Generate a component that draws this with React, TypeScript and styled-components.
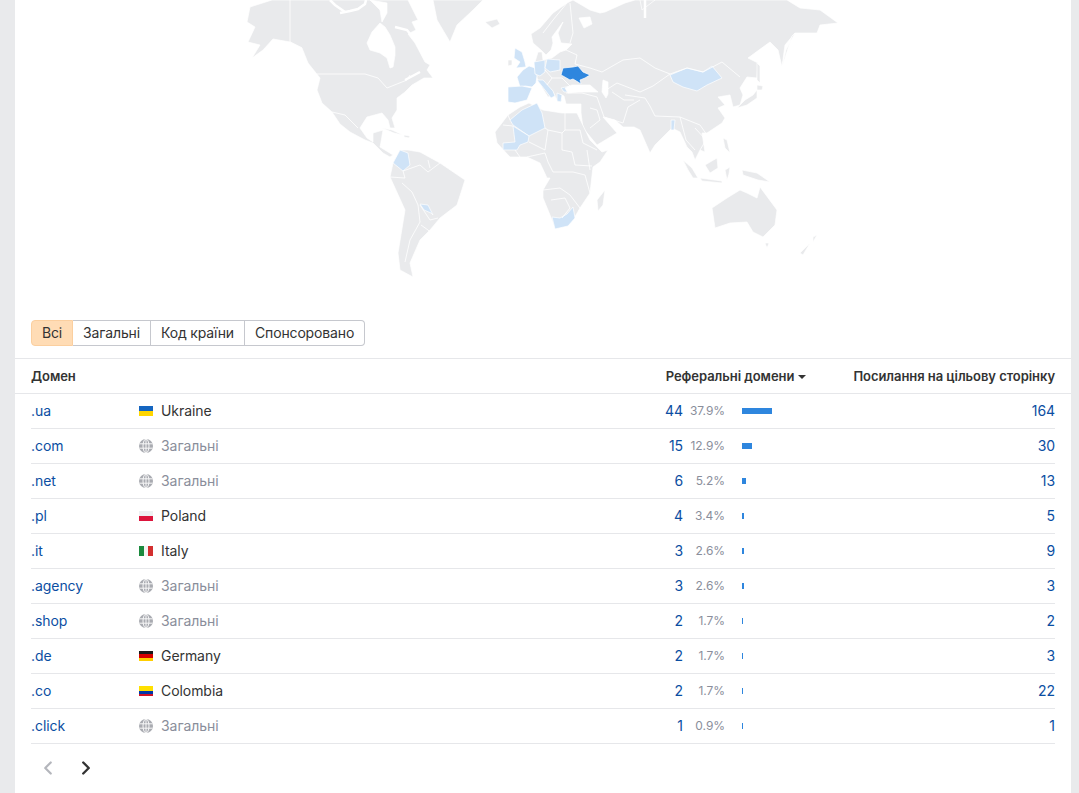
import React from "react";
import styled, { createGlobalStyle } from "styled-components";
import { ChevronLeft, ChevronRight } from "lucide-react";

const colors = {
  land: "#e9eaec",
  light: "#cfe3f7",
  strong: "#2e86de",
  link: "#0b4ea2",
  text: "#333333",
  muted: "#8a8e9b",
  line: "#e6e7ea",
};

const GREY = [
  // north america
  "250,7 272,0 408,0 418,20 412,22 416,30 408,34 415,43 425,62 430,65 427,70 433,78 424,78 412,85 405,92 397,98 397,110 392,118 395,128 390,128 388,120 382,113 367,117 360,128 367,138 373,142 373,133 383,130 381,142 380,147 393,155 390,157 383,153 373,143 365,140 350,132 340,124 332,112 322,103 317,90 320,78 308,63 302,48 290,42 273,39 263,50 252,58 260,45 248,42 255,27 247,22",
  // caribbean
  "382,128 392,130 403,135 394,133",
  "404,135 410,136 409,138 404,137",
  // greenland, iceland
  "433,0 483,0 473,10 457,25 450,42 437,20",
  "485,22 497,19 500,24 492,28",
  // south america
  "393,163 400,150 408,150 420,152 440,163 465,180 457,205 440,218 430,230 420,240 410,263 413,277 400,270 398,253 405,210 390,177",
  // eurasia
  "573,0 590,10 600,13 605,12 625,3 635,0 787,0 800,8 820,10 838,23 820,25 817,33 795,33 785,45 782,67 778,50 770,42 748,58 758,63 757,78 747,77 740,88 743,95 740,105 733,107 730,95 718,97 725,105 718,108 725,118 722,123 707,133 702,133 705,152 700,150 695,160 692,152 687,147 680,132 672,128 665,135 655,145 650,153 640,130 634,127 623,127 615,120 603,117 617,133 597,145 583,128 581,113 581,104 566,104 564,96 560,94 562,101 558,102 553,92 546,86 552,96 548,97 540,84 537,78 535,62 538,52 542,52 543,60 552,58 560,52 566,50 572,44 561,43 558,33 563,22 552,37 553,43 551,50 546,55 541,50 533,43 531,34 540,28 553,13 567,3",
  // islands
  "757,63 760,66 760,83 757,80",
  "757,85 763,86 762,90 757,90",
  "737,108 745,100 753,95 757,90 757,98 747,105",
  "508,60 512,60 512,65 508,66",
  "782,67 792,36 795,33 786,50",
  "640,0 655,0 642,10",
  "683,160 692,168 698,178 693,178 688,170",
  "700,178 722,181 722,183 702,181",
  "705,165 717,158 718,168 710,173",
  "725,170 730,167 729,174 727,180",
  "723,138 727,140 730,153 725,148",
  "742,170 757,173 770,182 758,180 743,175",
  "765,243 769,243 767,248",
  "813,237 817,235 813,242",
  "800,253 810,243 803,255",
  // australia
  "712,208 727,198 740,190 747,193 757,198 760,187 777,210 775,225 763,237 753,232 747,222 730,223 715,228",
  // africa
  "495,132 508,115 520,107 529,103 543,110 562,113 577,113 590,140 602,152 608,150 600,162 593,167 590,193 580,208 573,220 555,228 550,215 543,198 543,190 550,178 547,178 540,163 527,157 510,157 497,143",
  // madagascar
  "597,200 605,190 603,205 598,211",
];

const LIGHT = [
  "515,48 522,52 525,62 526,67 516,68 520,62 514,58", // uk
  "517,77 523,70 529,66 535,68 537,76 536,83 532,87 525,86 520,87", // france
  "508,87 522,86 532,88 527,100 515,103 508,102", // spain
  "534,62 545,60 545,72 540,76 535,74", // germany
  "547,59 560,60 560,70 550,72 545,68", // poland
  "537,80 543,80 553,91 555,96 551,98 545,90", // italy
  "557,93 562,95 561,102 557,101", // greece
  "561,88 570,86 572,92 564,92", // bulgaria
  "510,120 522,110 537,103 542,113 545,128 529,136 513,125", // algeria
  "513,126 529,136 528,142 520,145 517,150 503,150 503,143 515,142", // mali
  "393,163 400,150 408,153 410,165 403,171", // colombia
  "420,204 428,205 433,215 431,213 424,210", // paraguay
  "552,217 560,218 567,214 573,207 575,218 568,226 555,229", // south africa
  "670,75 687,68 703,72 712,66 722,78 707,85 697,91 683,87 673,82", // mongolia
  "671,120 675,120 674,130 671,130", // bangladesh
];

const UKRAINE =
  "561,75 563,68 573,67 578,66 583,72 590,75 585,78 580,80 581,84 578,82 573,79 570,80 563,76";

const WATER = [
  "367,43 372,32 380,23 385,27 390,35 395,47 395,55 393,67 390,68 387,58 380,53 370,50", // hudson
  "382,22 387,13 387,3 370,0 380,10", // foxe
  "565,88 572,85 580,85 590,85 598,92 590,92 578,92 568,93", // black sea
  "603,80 608,82 608,94 606,98 602,92", // caspian
  "579,18 590,17 592,24 584,28", // white sea
];

const CHANNELS = [
  "330,0 335,5 345,12",
  "340,13 350,11 358,9 365,4 366,0",
  "395,27 407,30 415,40",
  "405,80 420,72",
  "645,0 645,18",
];

const BORDERS = [
  "290,0 290,42 302,48",
  "317,74 365,74 378,78 387,88 407,80 410,75",
  "332,112 345,115 358,128",
  // europe and asia
  "543,33 553,20 567,3",
  "570,3 573,33 570,43",
  "566,50 577,55 575,64 590,68 602,72 623,60 640,58 655,68 670,74 687,68 703,72 722,62 740,77",
  "603,92 617,83 640,92 653,86 670,74",
  "625,95 645,98 650,106 655,116 680,117 700,125 707,135",
  "597,97 604,117 623,123 628,107 640,100",
  "590,108 597,110 600,120 590,128",
  "680,117 686,140 695,150",
  "695,128 706,140 700,150",
  "552,78 562,78 570,86",
  "545,70 552,78 547,85",
  "566,93 582,93 597,97",
  "612,92 624,100 634,100",
  // africa
  "565,113 565,130 580,130",
  "545,128 548,130 562,133 565,130",
  "562,133 562,150 572,152",
  "580,130 583,143 597,150",
  "587,150 590,170",
  "529,142 545,150 548,130",
  "527,157 545,153 548,162",
  "548,162 553,172 573,172 585,175 590,193",
  "572,152 575,165 592,166",
  "543,190 560,188 570,195 580,208",
  "551,200 565,198 570,208 562,218",
  "515,150 520,157",
  "503,125 513,126",
  "508,115 510,120",
  // south america
  "403,171 420,165 428,172 440,163",
  "390,177 405,178 403,171",
  "402,183 412,192 418,205 420,222 410,240 405,262",
  "428,160 430,168",
  "420,205 430,220 438,218",
  "421,225 428,230 430,232",
];

const Flag = styled.span<{ $stripes: string; $vertical?: boolean }>`
  display: block;
  width: 14px;
  height: 10px;
  flex: none;
  margin-top: 2px;
  background: linear-gradient(
    ${(p) => (p.$vertical ? "to right" : "to bottom")},
    ${(p) => p.$stripes}
  );
`;

const GlobeIcon = styled.svg`
  flex: none;
  margin-top: 2px;
`;

const Globe = () => (
  <GlobeIcon width="14" height="14" viewBox="0 0 14 14">
    <circle cx="7" cy="7" r="7" fill="#a9abb1" />
    <g fill="none" stroke="#fff" strokeWidth="0.9">
      <ellipse cx="7" cy="7" rx="3" ry="7" />
      <path d="M0.5 4.8h13M0.5 9.2h13M7 0v14" />
    </g>
  </GlobeIcon>
);

const stripes: Record<string, { s: string; v?: boolean }> = {
  Ukraine: { s: "#1565c0 50%, #ffd600 50%" },
  Poland: { s: "#eef0f2 50%, #dc143c 50%" },
  Italy: { s: "#1b8a3e 33%, #f4f5f4 33%, #f4f5f4 66%, #d32f2f 66%", v: true },
  Germany: { s: "#1a1a1a 33%, #d50000 33%, #d50000 66%, #ffce00 66%" },
  Colombia: { s: "#ffe000 50%, #0038a8 50%, #0038a8 75%, #ce1126 75%" },
};

const rows = [
  { d: ".ua", c: "Ukraine", n: 44, p: "37.9%", w: 30, l: 164 },
  { d: ".com", c: "", n: 15, p: "12.9%", w: 10, l: 30 },
  { d: ".net", c: "", n: 6, p: "5.2%", w: 4, l: 13 },
  { d: ".pl", c: "Poland", n: 4, p: "3.4%", w: 2, l: 5 },
  { d: ".it", c: "Italy", n: 3, p: "2.6%", w: 2, l: 9 },
  { d: ".agency", c: "", n: 3, p: "2.6%", w: 2, l: 3 },
  { d: ".shop", c: "", n: 2, p: "1.7%", w: 1, l: 2 },
  { d: ".de", c: "Germany", n: 2, p: "1.7%", w: 1, l: 3 },
  { d: ".co", c: "Colombia", n: 2, p: "1.7%", w: 1, l: 22 },
  { d: ".click", c: "", n: 1, p: "0.9%", w: 1, l: 1 },
];

const tabs = ["Всі", "Загальні", "Код країни", "Спонсоровано"];

export default function App() {
  return (
    <>
      <GlobalStyle />
      <Card>
        <MapBox>
          <MapSvg viewBox="15 0 1056 310">
            {GREY.map((p) => (
              <Land key={p} points={p} $fill={colors.land} />
            ))}
            {LIGHT.map((p) => (
              <Land key={p} points={p} $fill={colors.light} />
            ))}
            <Land points={UKRAINE} $fill={colors.strong} />
            {WATER.map((p) => (
              <Land key={p} points={p} $fill="#fff" />
            ))}
            {CHANNELS.map((p) => (
              <Line key={p} points={p} $w={2.5} />
            ))}
            {BORDERS.map((p) => (
              <Line key={p} points={p} $w={0.8} />
            ))}
          </MapSvg>
        </MapBox>

        <Tabs>
          {tabs.map((t, i) => (
            <Tab key={t} $active={i === 0}>
              {t}
            </Tab>
          ))}
        </Tabs>

        <HeadRow>
          <HeadCell>Домен</HeadCell>
          <SortCell>
            Реферальні домени
            <Caret />
          </SortCell>
          <HeadCell>Посилання на цільову сторінку</HeadCell>
        </HeadRow>

        {rows.map((r) => (
          <Row key={r.d}>
            <Domain>{r.d}</Domain>
            <Country $generic={!r.c}>
              {r.c ? (
                <Flag $stripes={stripes[r.c].s} $vertical={stripes[r.c].v} />
              ) : (
                <Globe />
              )}
              {r.c || "Загальні"}
            </Country>
            <Num>{r.n}</Num>
            <Percent>{r.p}</Percent>
            <BarCell>
              <Bar style={{ width: r.w }} />
            </BarCell>
            <Num>{r.l}</Num>
          </Row>
        ))}

        <Pager>
          <PageBtn $off>
            <ChevronLeft size={22} strokeWidth={2.4} />
          </PageBtn>
          <PageBtn>
            <ChevronRight size={22} strokeWidth={2.6} />
          </PageBtn>
        </Pager>
      </Card>
    </>
  );
}

const GlobalStyle = createGlobalStyle`
  html, body {
    margin: 0;
    background: #e9eaec;
    font-family: Inter, "Noto Sans", sans-serif;
    color: ${colors.text};
  }
`;

const Card = styled.div`
  margin: 0 8px 0 15px;
  height: 793px;
  background: #fff;
  overflow: hidden;
`;

const MapBox = styled.div`
  height: 320px;
`;

const MapSvg = styled.svg`
  display: block;
  width: 1056px;
  height: 310px;
`;

const Land = styled.polygon<{ $fill: string }>`
  fill: ${(p) => p.$fill};
  stroke: #fff;
  stroke-width: 0.7;
  stroke-linejoin: round;
`;

const Line = styled.polyline<{ $w: number }>`
  fill: none;
  stroke: #fff;
  stroke-width: ${(p) => p.$w};
`;

const Tabs = styled.div`
  display: flex;
  height: 26px;
  margin: 0 0 12px 16px;
`;

const Tab = styled.div<{ $active?: boolean }>`
  display: flex;
  align-items: center;
  padding: 0 10px 1px;
  font-size: 14px;
  letter-spacing: -0.15px;
  border: 1px solid #c6c8ce;
  border-left-width: 0;
  box-sizing: border-box;
  height: 26px;
  background: ${(p) => (p.$active ? "#ffdcb5" : "#fff")};

  &:first-child {
    border-left-width: 1px;
    border-radius: 4px 0 0 4px;
    border-color: ${(p) => (p.$active ? "#fbcf9f" : "#c6c8ce")};
  }
  &:last-child {
    border-radius: 0 4px 4px 0;
  }
`;

const HeadRow = styled.div`
  display: flex;
  align-items: center;
  height: 34px;
  padding: 0 16px;
  border-top: 1px solid ${colors.line};
  border-bottom: 1px solid ${colors.line};
`;

const HeadCell = styled.div`
  font-size: 13px;
  font-weight: 600;
  letter-spacing: -0.05px;
  white-space: nowrap;
`;

const SortCell = styled(HeadCell)`
  display: flex;
  align-items: center;
  gap: 4px;
  margin: 0 47px 0 auto;
`;

const Caret = styled.span`
  width: 0;
  height: 0;
  border-left: 4px solid transparent;
  border-right: 4px solid transparent;
  border-top: 4px solid #333;
  margin-top: 1px;
`;

const Row = styled.div`
  display: grid;
  grid-template-columns: 108px 504px 40px 42px 100px 1fr;
  align-items: center;
  height: 32px;
  padding-bottom: 2px;
  margin: 0 16px;
  font-size: 14px;
  letter-spacing: -0.06px;
  border-bottom: 1px solid ${colors.line};

  &:last-of-type {
    margin: 0;
    padding: 0 16px 2px;
  }
`;

const Domain = styled.div`
  color: ${colors.link};
`;

const Country = styled.div<{ $generic?: boolean }>`
  display: flex;
  align-items: center;
  gap: 8px;
  color: ${(p) => (p.$generic ? colors.muted : colors.text)};
`;

const Num = styled.div`
  color: ${colors.link};
  text-align: right;
`;

const Percent = styled.div`
  font-size: 12px;
  color: ${colors.muted};
  text-align: right;
`;

const BarCell = styled.div`
  padding: 1px 0 0 17px;
`;

const Bar = styled.div`
  height: 6px;
  background: ${colors.strong};
`;

const Pager = styled.div`
  display: flex;
  gap: 16px;
  padding: 13px 0 0 22px;
`;

const PageBtn = styled.div<{ $off?: boolean }>`
  display: flex;
  color: ${(p) => (p.$off ? "#b4b6bc" : "#333")};
`;
